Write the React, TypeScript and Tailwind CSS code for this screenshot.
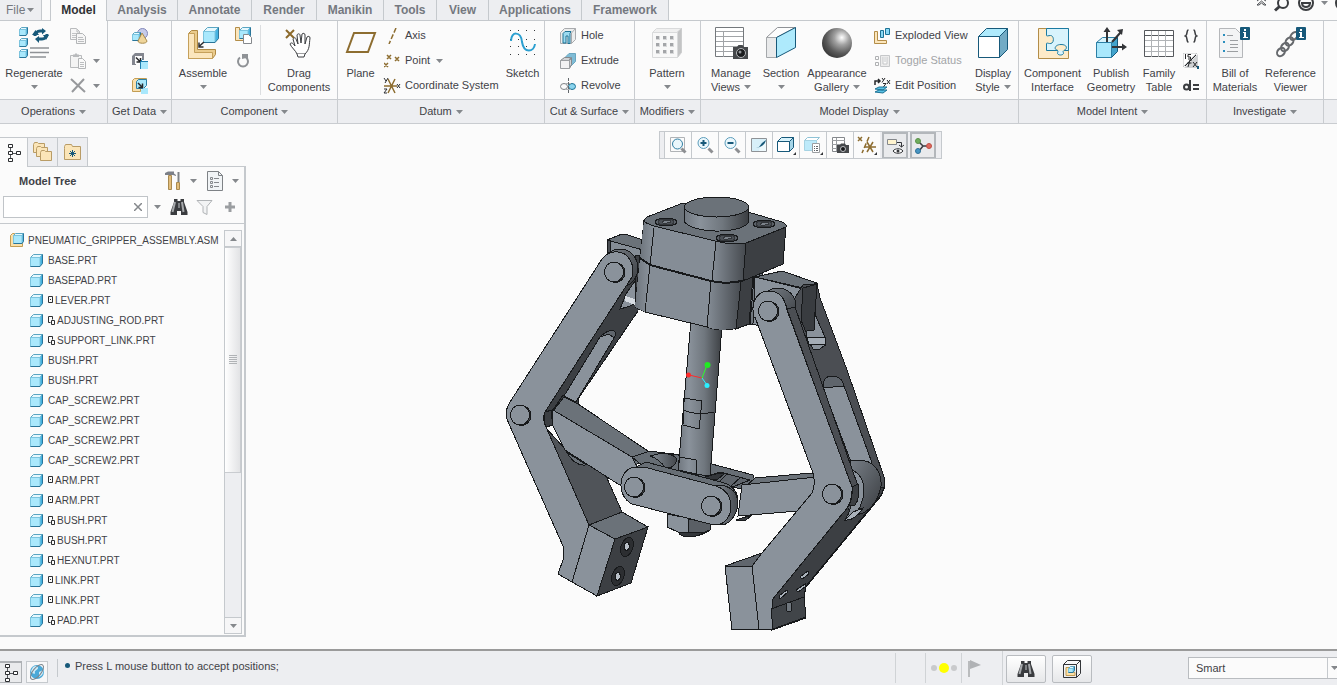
import type { ReactNode } from 'react'

const TABS = [
  { label: 'Analysis', width: 'w-[71px]' },
  { label: 'Annotate', width: 'w-[74px]' },
  { label: 'Render', width: 'w-[65px]' },
  { label: 'Manikin', width: 'w-[67px]' },
  { label: 'Tools', width: 'w-[53px]' },
  { label: 'View', width: 'w-[52px]' },
  { label: 'Applications', width: 'w-[93px]' },
  { label: 'Framework', width: 'w-[87px]' },
]

type Mark = 'packaged' | 'placed'

const PARTS: { name: string; mark?: Mark }[] = [
  { name: 'BASE.PRT' },
  { name: 'BASEPAD.PRT' },
  { name: 'LEVER.PRT', mark: 'packaged' },
  { name: 'ADJUSTING_ROD.PRT', mark: 'placed' },
  { name: 'SUPPORT_LINK.PRT', mark: 'placed' },
  { name: 'BUSH.PRT' },
  { name: 'BUSH.PRT' },
  { name: 'CAP_SCREW2.PRT' },
  { name: 'CAP_SCREW2.PRT' },
  { name: 'CAP_SCREW2.PRT' },
  { name: 'CAP_SCREW2.PRT' },
  { name: 'ARM.PRT', mark: 'packaged' },
  { name: 'ARM.PRT', mark: 'packaged' },
  { name: 'BUSH.PRT', mark: 'placed' },
  { name: 'BUSH.PRT', mark: 'placed' },
  { name: 'HEXNUT.PRT', mark: 'placed' },
  { name: 'LINK.PRT', mark: 'packaged' },
  { name: 'LINK.PRT', mark: 'packaged' },
  { name: 'PAD.PRT', mark: 'placed' },
]

/* ---------- shared bits ---------- */

function Svg({ w = 16, h, children }: { w?: number; h?: number; children: ReactNode }) {
  return (
    <svg width={w} height={h ?? w} viewBox={`0 0 ${w} ${h ?? w}`} fill="none" className="shrink-0" aria-hidden="true">
      {children}
    </svg>
  )
}

function Caret() {
  return (
    <svg width="7" height="4" viewBox="0 0 7 4" className="shrink-0" aria-hidden="true">
      <path d="M0 0h7L3.500 4z" fill="#85888c" />
    </svg>
  )
}

function Cube({ x = 0, y = 0, s = 14, d = 3 }: { x?: number; y?: number; s?: number; d?: number }) {
  const f = s - d
  return (
    <g transform={`translate(${x} ${y})`} strokeLinejoin="round">
      <path d={`M.5 ${d + 0.5}L${d + 0.5} .5H${s - 0.5}L${f} ${d + 0.5}z`} fill="#e4f8fe" stroke="#5aa5c2" />
      <path d={`M${f} ${d + 0.5}L${s - 0.5} .5V${f - 0.5}L${f} ${s - 0.5}z`} fill="#45b2e0" />
      <path d={`M.5 ${d + 0.5}H${f}V${s - 0.5}H.5z`} fill="#a9e8fc" stroke="#7cc4de" />
      <path d={`M.5 ${s - 0.5}H${f}L${s - 0.5} ${f - 0.5}V.5`} stroke="#2a7599" />
    </g>
  )
}

function Binoculars() {
  return (
    <Svg w={18} h={16}>
      <path d="M4 0h3.500v2h3V0H14v3l3.500 10v3H11v-4H7v4H.5v-3L4 3z" fill="#3a3c3f" />
      <path d="M5 3L2.500 13M12 3l1.500 10" stroke="#a6a9ac" strokeWidth="2" />
      <path d="M8 4h2v5H8z" fill="#7e8184" />
    </Svg>
  )
}

function TreeIcon() {
  return (
    <Svg w={14} h={20}>
      <path d="M3.500 5v3M3.500 12v3M6 10.500h3" stroke="#55585c" />
      <path d="M1.500 1.500h4v3h-4zM1.500 8.500h4v3h-4zM1.500 15.500h4v3h-4zM9.500 8.500h4v3h-4z" stroke="#2c2e31" fill="#fff" />
    </Svg>
  )
}

/* ---------- ribbon icons ---------- */

const regenerateIcon = (
  <Svg w={32}>
    <Cube x={1} s={9} d={2} />
    <Cube x={1} y={11} s={9} d={2} />
    <Cube x={1} y={22} s={9} d={2} />
    <path d="M17 9a5 5 0 0 1 5-5h3M29 7a5 5 0 0 1-5 5h-3" stroke="#17597a" strokeWidth="3" />
    <path d="M14 8h7l-3.500-5zM25 8h6l-3 5zM24 1l4 3-4 3.500zM21 9v7l-4-4z" fill="#17597a" />
    <path d="M12 21h19M12 25.500h19M12 30h16" stroke="#8f9296" strokeWidth="1.500" />
  </Svg>
)

const copyIcon = (
  <Svg>
    <path d="M.5.500h6l3 3v8h-9zM7 1v3h3" stroke="#b9bbbd" fill="#f6f6f6" />
    <path d="M2 5.500h5M2 7.500h5M2 9.500h5" stroke="#c2c4c6" />
    <path d="M6.500 5.500h6l3 3v7h-9z" stroke="#b3b5b7" fill="#f6f6f6" />
    <path d="M8 9.500h5M8 11.500h6M8 13.500h6" stroke="#bcbec0" />
  </Svg>
)

const pasteIcon = (
  <Svg>
    <path d="M.5 2.500h11v12H.5z" stroke="#b9bbbd" fill="#f4f4f4" />
    <path d="M3 4h6V1.500H7.500L6 0 4.500 1.500H3z" fill="#b9bbbd" />
    <path d="M8.500 5.500h4l3 3v7h-7z" stroke="#b3b5b7" fill="#fafafa" />
    <path d="M10 9.500h4M10 11.500h4M10 13.500h4" stroke="#bcbec0" />
  </Svg>
)

const deleteIcon = (
  <Svg>
    <path d="M1 1l14 13M14 1L2 14" stroke="#97999c" strokeWidth="2" />
  </Svg>
)

const userDataIcon = (
  <Svg>
    <circle cx="10.500" cy="5.500" r="5" fill="#c6cbea" stroke="#8186b8" />
    <Cube y={4} s={9} d={2} />
    <path d="M10 5l5 8c0 3-9 3-9 0z" fill="#efd59b" stroke="#a98b4c" />
  </Svg>
)

const copyGeomIcon = (
  <Svg>
    <path d="M0 3l3-3h9v7h-2V5L8 11H4v1H0z" fill="#83868f" />
    <path d="M3 3h7v8H3z" fill="#fdfdfd" />
    <path d="M4 4.500l4 4M8.500 5v4h-4" stroke="#26282b" strokeWidth="1.500" />
    <path d="M9 9h7v7H9z" fill="#a9e8fc" />
    <path d="M8.500 16V8.500l2-2M9 8.500h7" stroke="#1d7fb0" />
  </Svg>
)

const shrinkwrapIcon = (
  <Svg>
    <path d="M.5 2.500l2-2h12v4h-6v9h-8z" fill="#f8dfae" stroke="#c39d53" />
    <path d="M4.500 3.500l2-2h8v6l-3 3h-7z" fill="#a9e8fc" stroke="#2b7fa5" />
    <path d="M6 5l4 4M10.500 5.500v4h-4" stroke="#26282b" strokeWidth="1.500" />
    <path d="M9 12l3-2h4v6H9z" fill="#a9e8fc" />
  </Svg>
)

const assembleIcon = (
  <Svg w={32}>
    <path d="M1.500 6.500l3-3h6v19h18v5l-3 4h-24z" fill="#eacb8c" stroke="#b08a44" />
    <path d="M1.500 6.500h6v19h18v6h-24z" fill="#fbe6bd" stroke="#c5a05b" />
    <Cube x={16} s={16} d={4} />
    <path d="M17 15l-5 4.500M12 15.500v4.500h4.500" stroke="#2d2f32" strokeWidth="1.500" />
  </Svg>
)

const createIcon = (
  <Svg w={17}>
    <path d="M.5.500h4v9h8v4H.5z" fill="#fbe6bd" stroke="#b38d48" />
    <Cube x={4} s={12} d={3} />
    <path d="M8.500 7.500h5l3 3v6h-8z" fill="#fff" stroke="#85888c" />
  </Svg>
)

const repeatIcon = (
  <Svg w={14}>
    <path d="M4 3.500a5 5 0 1 0 6 0" stroke="#8f9296" strokeWidth="2" />
    <path d="M6 0h6v6l-2-2-4 1z" fill="#8f9296" />
  </Svg>
)

const dragIcon = (
  <Svg w={30} h={32}>
    <path d="M2 3l8 8M10 3l-8 8" stroke="#8c6a2c" strokeWidth="2" />
    <path
      d="M13 27c-1-3-6-7-7-10 1-2 3-1 5 2l-2-7c1-2 3-1 3 0l2 5-1-9c1-2 3-1 3 0l1 8 1-9c1-1 3-1 3 1v9l2-7c1-1 3-1 3 1-1 7 0 11-5 16z"
      fill="#fff"
      stroke="#3b3d40"
    />
    <path d="M13 27l1 3h6l1-3" stroke="#3b3d40" fill="#fff" />
  </Svg>
)

const planeIcon = (
  <Svg w={32}>
    <path d="M9 6h21l-7 19H2z" stroke="#8d6d30" strokeWidth="2" />
  </Svg>
)

const axisIcon = (
  <Svg>
    <path d="M12 0L5 16" stroke="#8d6d30" strokeWidth="1.500" strokeDasharray="5 2" />
  </Svg>
)

const pointIcon = (
  <Svg>
    <path d="M3 2l4 4M7 2L3 6M11 4l4 4M15 4l-4 4M0 10l4 4M4 10l-4 4" stroke="#8d6d30" strokeWidth="1.500" />
  </Svg>
)

const csysIcon = (
  <Svg w={18}>
    <path d="M1 9h13M5 2l7 14M12 2L5 16" stroke="#8d6d30" strokeWidth="1.500" />
    <path d="M1 1l2 3M5 1L2 6M1 12h3l-3 4h3M14 7l3 4M17 7l-3 4" stroke="#2d2f32" />
  </Svg>
)

const sketchIcon = (
  <Svg w={30} h={32}>
    {[3, 12, 19, 27].map(y => (
      <path key={y} d={`M2 ${y}.5h28`} stroke="#34373a" strokeDasharray="1 7" />
    ))}
    <path d="M3 14C3 4 13 4 14 15c2 12 12 10 13 2" stroke="#2b9fd0" strokeWidth="2" />
  </Svg>
)

const holeIcon = (
  <Svg>
    <path d="M.5 4.500l4-4h11v11l-4 4H.5z" fill="#eceded" stroke="#a9abae" />
    <path d="M3 15V5.500l2-2h6l-1 2v10H8V8H6v7z" fill="#9cdaf0" stroke="#1d7295" />
    <path d="M11.500 15.500V5l4-4.500" stroke="#a9abae" />
  </Svg>
)

const extrudeIcon = (
  <Svg>
    <path d="M5 4.500l4-4h6.500v8l-5 5z" fill="#7fbcd6" stroke="#6aa6c0" />
    <path d="M.5 7.500l4-3h6l-1 3zM9.500 7.500l2-3v7l-2 4z" fill="#d0d2d4" stroke="#85888c" />
    <path d="M.5 7.500h9v8h-9z" fill="#f1f1f2" stroke="#9b9ea1" />
  </Svg>
)

const revolveIcon = (
  <Svg>
    <ellipse cx="4" cy="8.500" rx="3.500" ry="3" stroke="#7e8286" />
    <ellipse cx="12" cy="8.500" rx="3.500" ry="3" fill="#8ad4ee" stroke="#1d7295" />
    <path d="M5 5.500h6M5 11.500h6" stroke="#b0b3b6" />
    <path d="M8.500 0v16" stroke="#63676b" strokeDasharray="3 1" />
  </Svg>
)

const patternIcon = (
  <Svg w={32}>
    <path d="M1.500 5.500l4-4h25l-5 4z" fill="#f0f0f0" stroke="#d9dadb" />
    <path d="M26.500 5.500l4-4v24l-4 5z" fill="#c3c4c5" stroke="#cccdce" />
    <path d="M1.500 5.500h25v25h-25z" fill="#f8f8f8" stroke="#d9dadb" />
    {[9, 16, 23].map(y => [5, 12, 19].map(x => (
      <g key={`${x}-${y}`}>
        <path d={`M${x} ${y}h4v4h-4z`} fill="#d7d8d9" />
        <path d={`M${x} ${y}h3v3h-3z`} fill="#a3a5a8" />
      </g>
    )))}
  </Svg>
)

const manageViewsIcon = (
  <Svg w={33} h={32}>
    <path d="M.5.500h28v29h-28z" fill="#fff" stroke="#74787c" />
    <path d="M1 4.500h27M1 9.500h27M1 14.500h27M1 19.500h27M1 24.500h27M8.500 5v25" stroke="#a1a4a7" />
    <path d="M18 20h4l1.500-2h4l1.500 2h4v12H18z" fill="#46484b" />
    <circle cx="26" cy="26" r="4.500" fill="#1b1c1e" stroke="#b5b7ba" />
    <circle cx="25" cy="25" r="1.500" fill="#95989c" />
  </Svg>
)

const sectionIcon = (
  <Svg w={32}>
    <path d="M1.500 10.500l11-10h18l-19 10z" fill="#fdfdfd" stroke="#8f9296" />
    <path d="M1.500 10.500h10v20h-10z" fill="#e9eaeb" stroke="#a5a8ab" />
    <path d="M11.500 10.500l19-10v20l-19 10z" fill="#aeeafc" stroke="#17597a" />
  </Svg>
)

const appearanceIcon = (
  <Svg w={32}>
    <defs>
      <radialGradient id="ball" cx=".66" cy=".32" r=".7">
        <stop offset="0" stopColor="#fff" />
        <stop offset=".35" stopColor="#a2a2a2" />
        <stop offset=".75" stopColor="#5a5a5a" />
        <stop offset="1" stopColor="#3e3e3e" />
      </radialGradient>
    </defs>
    <circle cx="16" cy="16" r="15" fill="url(#ball)" />
  </Svg>
)

const explodedIcon = (
  <Svg>
    <path d="M.5 3.500h3v9h9v3H.5z" fill="#fbe6bd" stroke="#b38d48" />
    <path d="M6.500 2.500h3v7h-3zM11.500.500h4v6h-4z" fill="#8ad9f5" stroke="#1d7295" />
  </Svg>
)

const toggleIcon = (
  <Svg h={12}>
    <path d="M1.500 1.500h3v3h-3zM1.500 7.500h3v3h-3z" stroke="#aeb0b2" />
    <path d="M6.500.500h9v11h-9zM9 2v7h4V2M11 2v5" stroke="#c6c8ca" fill="#ececec" />
  </Svg>
)

const editPositionIcon = (
  <Svg w={17}>
    <path d="M1 8V4h4M4 2l2 2-2 2" stroke="#26282b" strokeWidth="1.500" />
    <path d="M8 1l1.500 2M11 1L8 5.500M13 3l3 4M16 3l-3 4M9 6.500h3l-3 4h3" stroke="#26282b" />
    <path d="M1 12l4-2h8l-4 3zM1 15l4-2h8l-4 3z" fill="#59c2e6" stroke="#1d7295" />
  </Svg>
)

const displayStyleIcon = (
  <Svg w={32}>
    <path d="M1.500 9.500l8-8h21l-8 8z" fill="#aeeafc" stroke="#17597a" />
    <path d="M22.500 9.500l8-8v21l-8 8z" fill="#72abc5" stroke="#17597a" />
    <path d="M1.500 9.500h21v21h-21z" fill="#fff" stroke="#17597a" />
  </Svg>
)

const interfaceIcon = (
  <Svg w={32}>
    <path d="M1.500 1.500h30v30h-30z" fill="#fdebc9" stroke="#b38d48" />
    <path
      d="M9.500 1.500h22v22h-5c-1 0 0 2 0 3-1 2-5 2-6 0 0-1 1-3 0-3h-11v-7c0-1 2 0 3 0 5 1 5-8 1-8-2 0-4 1-4 0z"
      fill="#d8f3fc"
      stroke="#1b7aa2"
    />
    <path d="M21 23.500c-5-1-3-6 3-6s7 4 3 6" fill="#fdebc9" stroke="#1b7aa2" />
  </Svg>
)

const publishIcon = (
  <Svg w={32}>
    <path d="M1.500 15.500l6-5h15l-6 5z" fill="#d9f4fc" stroke="#2b7fa5" />
    <path d="M16.500 15.500l6-5v14l-6 6z" fill="#41a3cc" stroke="#17597a" />
    <path d="M1.500 15.500h15v15h-15z" fill="#a9e8fc" stroke="#2b7fa5" />
    <path d="M12 15V3M17 15L26 5M17 20h12" stroke="#333538" strokeWidth="2" />
    <path d="M8.500 5L12 0l3.500 5zM22 3l6-1-1 6zM27 16.500l5 3.500-5 3.500z" fill="#333538" />
  </Svg>
)

const familyIcon = (
  <Svg w={32}>
    <path d="M1.500 3.500h29v26h-29z" fill="#fff" stroke="#55585c" />
    <path d="M2 8.500h28" stroke="#55585c" />
    <path d="M2 13.500h28M2 19.500h28M2 24.500h28M8.500 4v26M15.500 4v26M22.500 4v26" stroke="#b0b3b6" />
  </Svg>
)

const bracketsIcon = (
  <Svg w={14}>
    <path d="M4.500 1C2 1 4 6 1.500 7 4 8 2 13 4.500 13M9.500 1c2.500 0 .5 5 3 6-2.500 1-.5 6-3 6" stroke="#3b3d40" strokeWidth="1.500" />
  </Svg>
)

const switchDimsIcon = (
  <Svg>
    <path d="M0 0h14L0 14z" fill="#fff" stroke="#bfc1c3" />
    <path d="M15 1v14H1z" fill="#d0d2d4" />
    <path d="M2.500 1v5M5 6h2.500V4H5V1.500h3M2 13L13 2M5 14l2-7h2M4.500 10h4M10 9l4 5M14 9l-4 5" stroke="#26282b" />
    <path d="M14 13h2v3h-2z" fill="#17597a" />
  </Svg>
)

const relationsIcon = (
  <Svg h={12}>
    <circle cx="3.500" cy="7" r="2.500" stroke="#3b3d40" strokeWidth="2" />
    <path d="M7 0v11M10 5h6M10 9h6" stroke="#3b3d40" strokeWidth="2" />
  </Svg>
)

const infoBadge = (
  <>
    <rect x="21" width="10" height="13" rx="1" fill="#17597a" />
    <path d="M25 2h2v2h-2zM24 5h3v5h2v1h-5v-1h1V6h-1z" fill="#fff" />
  </>
)

const bomIcon = (
  <Svg w={32}>
    <path d="M.5 1.500h16l7 7v22H.5z" fill="#f3f4f5" stroke="#b5b7ba" />
    <path d="M4 7h2v2H4zM4 14h2v2H4zM4 23h2v2H4z" fill="#2b8fbe" />
    <path d="M8 8.500h6M11 13.500h8M11 17.500h8M11 20.500h8M8 24.500h11" stroke="#9b9ea1" />
    {infoBadge}
  </Svg>
)

const refViewerIcon = (
  <Svg w={32}>
    <g stroke="#66696d" strokeWidth="2">
      <ellipse cx="6" cy="25" rx="4.500" ry="3.500" transform="rotate(-50 6 25)" />
      <ellipse cx="10" cy="20" rx="4.500" ry="3.500" transform="rotate(-50 10 20)" />
      <ellipse cx="14.500" cy="14.500" rx="4.500" ry="3.500" transform="rotate(-50 14.500 14.500)" />
      <ellipse cx="19" cy="9" rx="4.500" ry="3" transform="rotate(-50 19 9)" />
    </g>
    {infoBadge}
  </Svg>
)

/* ---------- ribbon ---------- */

function Group({ label, className, children }: { label: string; className: string; children: ReactNode }) {
  return (
    <section className={`${className} shrink-0 flex flex-col border-r border-[#c9ccd0]`}>
      <div className="h-[78px] flex">{children}</div>
      <button className="h-6 flex items-center justify-center gap-1 border-t border-[#c9ccd0] bg-[#edeef1] whitespace-nowrap">
        {label}
        <Caret />
      </button>
    </section>
  )
}

function BigButton({ icon, lines, caret, className }: {
  icon: ReactNode; lines: string[]; caret?: 'inline' | 'below'; className: string
}) {
  return (
    <button className={`${className} shrink-0 flex flex-col items-center pt-[6px] leading-[14px]`}>
      <span className="h-[39px]">{icon}</span>
      {lines.map((line, i) => (
        <span key={line} className="flex items-center gap-1 whitespace-nowrap">
          {line}
          {caret === 'inline' && i === lines.length - 1 && <Caret />}
        </span>
      ))}
      {caret === 'below' && <span className="h-[14px] flex items-center"><Caret /></span>}
    </button>
  )
}

function SmallButton({ icon, label, caret, disabled }: {
  icon: ReactNode; label?: string; caret?: boolean; disabled?: boolean
}) {
  return (
    <button
      disabled={disabled}
      className={`h-[25px] flex items-center whitespace-nowrap ${disabled ? 'text-[#a2a4a7]' : ''}`}
    >
      <span className="w-[18px] flex justify-center">{icon}</span>
      {label && <span className="ml-1">{label}</span>}
      {caret && <span className="ml-[6px]"><Caret /></span>}
    </button>
  )
}

function Ribbon() {
  return (
    <div className="flex overflow-hidden border-b border-[#c9ccd0]">
      <Group label="Operations" className="w-[108px]">
        <BigButton icon={regenerateIcon} lines={['Regenerate']} caret="below" className="w-[68px]" />
        <div className="pl-px pt-[2px]">
          <SmallButton icon={copyIcon} />
          <SmallButton icon={pasteIcon} caret />
          <SmallButton icon={deleteIcon} caret />
        </div>
      </Group>
      <Group label="Get Data" className="w-[64px]">
        <div className="flex-1 flex flex-col items-center pt-[2px]">
          <SmallButton icon={userDataIcon} />
          <SmallButton icon={copyGeomIcon} />
          <SmallButton icon={shrinkwrapIcon} />
        </div>
      </Group>
      <Group label="Component" className="w-[166px]">
        <BigButton icon={assembleIcon} lines={['Assemble']} caret="below" className="w-[62px]" />
        <div className="w-[26px] pt-[2px]">
          <SmallButton icon={createIcon} />
          <SmallButton icon={repeatIcon} />
        </div>
        <div className="my-1 border-l border-[#dcdee0]" />
        <BigButton icon={dragIcon} lines={['Drag', 'Components']} className="flex-1" />
      </Group>
      <Group label="Datum" className="w-[207px]">
        <BigButton icon={planeIcon} lines={['Plane']} className="w-[45px]" />
        <div className="flex-1 pt-[2px]">
          <SmallButton icon={axisIcon} label="Axis" />
          <SmallButton icon={pointIcon} label="Point" caret />
          <SmallButton icon={csysIcon} label="Coordinate System" />
        </div>
        <BigButton icon={sketchIcon} lines={['Sketch']} className="w-12" />
      </Group>
      <Group label="Cut & Surface" className="w-[90px]">
        <div className="pl-[14px] pt-[2px]">
          <SmallButton icon={holeIcon} label="Hole" />
          <SmallButton icon={extrudeIcon} label="Extrude" />
          <SmallButton icon={revolveIcon} label="Revolve" />
        </div>
      </Group>
      <Group label="Modifiers" className="w-[66px]">
        <BigButton icon={patternIcon} lines={['Pattern']} caret="below" className="w-[64px]" />
      </Group>
      <Group label="Model Display" className="w-[318px]">
        <BigButton icon={manageViewsIcon} lines={['Manage', 'Views']} caret="inline" className="w-[60px]" />
        <BigButton icon={sectionIcon} lines={['Section']} caret="below" className="w-[40px]" />
        <BigButton icon={appearanceIcon} lines={['Appearance', 'Gallery']} caret="inline" className="w-[72px]" />
        <div className="flex-1 pt-[2px]">
          <SmallButton icon={explodedIcon} label="Exploded View" />
          <SmallButton icon={toggleIcon} label="Toggle Status" disabled />
          <SmallButton icon={editPositionIcon} label="Edit Position" />
        </div>
        <BigButton icon={displayStyleIcon} lines={['Display', 'Style']} caret="inline" className="w-[50px]" />
      </Group>
      <Group label="Model Intent" className="w-[188px]">
        <BigButton icon={interfaceIcon} lines={['Component', 'Interface']} className="w-[67px]" />
        <BigButton icon={publishIcon} lines={['Publish', 'Geometry']} className="w-[50px]" />
        <BigButton icon={familyIcon} lines={['Family', 'Table']} className="w-[46px]" />
        <div className="pt-[2px]">
          <SmallButton icon={bracketsIcon} />
          <SmallButton icon={switchDimsIcon} />
          <SmallButton icon={relationsIcon} />
        </div>
      </Group>
      <Group label="Investigate" className="w-[117px]">
        <BigButton icon={bomIcon} lines={['Bill of', 'Materials']} className="w-[56px]" />
        <BigButton icon={refViewerIcon} lines={['Reference', 'Viewer']} className="w-[55px]" />
      </Group>
      <div className="flex-1 flex flex-col justify-end">
        <div className="h-6 border-t border-[#c9ccd0] bg-[#edeef1]" />
      </div>
    </div>
  )
}

function TabBar() {
  return (
    <nav className="h-[21px] flex text-[12px] font-bold text-[#74787f]">
      <button className="w-[42px] flex items-center gap-[2px] pl-[6px] border-r border-b border-[#c5c9cd] bg-[#edeef1] font-normal">
        File
        <Caret />
      </button>
      <div className="w-2 border-b border-[#c5c9cd]" />
      <button className="w-[57px] pb-px border-x border-[#c5c9cd] text-[#2f3235]">Model</button>
      {TABS.map(tab => (
        <button key={tab.label} className={`${tab.width} shrink-0 border-r border-b border-[#c5c9cd] bg-[#edeef1]`}>
          {tab.label}
        </button>
      ))}
      <div className="flex-1 flex justify-end items-start overflow-hidden border-b border-[#c5c9cd]">
        <svg width="84" height="12" viewBox="0 0 84 12" fill="none" aria-hidden="true">
          <path d="M4 1l4-3 5 3M4 5l4.500-4L13 5h-2L8.500 3 6 5z" stroke="#4a4d51" />
          <circle cx="30" cy="3" r="5" stroke="#3b3d40" strokeWidth="2" />
          <path d="M26.500 6.500L22 10.500" stroke="#3b3d40" strokeWidth="3" />
          <circle cx="53" cy="3" r="7" stroke="#3b3d40" strokeWidth="2" />
          <path d="M48 3h10M49 4c1 4 7 4 8 0" stroke="#3b3d40" strokeWidth="2" />
          <path d="M68 1h7l-3.500 4z" fill="#85888c" />
          <circle cx="90" cy="3" r="7" stroke="#3b3d40" strokeWidth="2" />
        </svg>
      </div>
    </nav>
  )
}

/* ---------- model tree ---------- */

function Folder({ x, y }: { x: number; y: number }) {
  return (
    <path
      d="M.5 2.500V10.500h11v-9h-6L4.500.500h-3z"
      transform={`translate(${x} ${y})`}
      fill="#fbe5b8"
      stroke="#b99c66"
    />
  )
}

function PartMark({ mark }: { mark: Mark }) {
  return mark === 'packaged' ? (
    <svg width="7" height="10" viewBox="0 0 7 10" fill="none" className="shrink-0">
      <path d="M.5 1.500h4v6h-4z" stroke="#2c2e31" />
      <path d="M2 4h1v1H2z" fill="#2c2e31" />
    </svg>
  ) : (
    <svg width="9" height="10" viewBox="0 0 9 10" fill="none" className="shrink-0">
      <path d="M2.500 7.500h-2v-6h4v3M3.500 5.500h3v4h-3z" stroke="#2c2e31" />
    </svg>
  )
}

function PartIcon() {
  return (
    <Svg w={18} h={14}>
      <Cube s={13} y={1} />
    </Svg>
  )
}

function ModelTree() {
  return (
    <aside className="w-[246px] shrink-0 flex flex-col pt-[13px] pb-3">
      <div className="h-[30px] flex">
        <button title="Model Tree" className="w-[27px] flex items-center justify-center border-t border-[#c5c9cd]">
          <TreeIcon />
        </button>
        <button title="Folder Browser" className="w-[31px] flex items-center justify-center border border-[#c5c9cd] bg-[#edeef1]">
          <Svg w={20}>
            <Folder x={0} y={0} />
            <Folder x={3} y={4} />
            <Folder x={7} y={8} />
          </Svg>
        </button>
        <button title="Favorites" className="w-[30px] flex items-center justify-center border border-l-0 border-[#c5c9cd] bg-[#edeef1]">
          <Svg w={18} h={16}>
            <path d="M.5 4.500v11h16v-13h-8l-1-2h-6l-1 2z" fill="#fbe5b8" stroke="#b99c66" />
            <path d="M8.500 6v7M5 9.500h7M6 7l5 5M11 7l-5 5" stroke="#17597a" />
          </Svg>
        </button>
        <div className="flex-1 border-b border-[#c5c9cd]" />
      </div>

      <div className="flex-1 min-h-0 flex flex-col border-r-2 border-b-2 border-[#c5c9cd]">
        <div className="h-7 flex items-center pl-[19px] pr-[5px]">
          <h2 className="flex-1 font-bold">Model Tree</h2>
          <button title="Settings" className="flex items-center gap-2">
            <Svg w={18} h={20}>
              <path d="M1 2l3-1.500h6v2L12 4v1L9 4H1z" fill="#7c8088" />
              <path d="M4.500 4.500h3v14h-3z" fill="#e3be7c" stroke="#a98a50" />
              <path d="M14.500 1v10" stroke="#7e8286" strokeWidth="2" />
              <path d="M12.500 11.500h3v7h-3z" fill="#e3be7c" stroke="#a98a50" />
            </Svg>
            <Caret />
          </button>
          <button title="Show" className="ml-[10px] flex items-center gap-2">
            <Svg w={17} h={20}>
              <path d="M.5.500h11l4 4v15H.5z" fill="#f1f4f6" stroke="#7e8286" />
              <path d="M11.500.500v4h4" stroke="#7e8286" />
              <path d="M3.500 6.500h2v2h-2zM3.500 10.500h2v2h-2zM3.500 14.500h2v2h-2zM7 7.500h5M7 11.500h5M7 15.500h5" stroke="#85888c" />
            </Svg>
            <Caret />
          </button>
        </div>
        <div className="h-7 flex items-start pl-[3px]">
          <div className="w-[145px] h-[22px] mt-px flex items-center border border-[#c0c4c8] bg-white">
            <input aria-label="Search model tree" className="min-w-0 flex-1 px-1 outline-none bg-transparent" />
            <button title="Clear" className="w-[18px] flex justify-center">
              <Svg w={8}>
                <path d="M0 0l8 8M8 0L0 8" stroke="#85888c" strokeWidth="1.500" />
              </Svg>
            </button>
          </div>
          <div className="h-6 flex items-center pl-[6px]">
            <button title="Search options"><Caret /></button>
            <button title="Find" className="ml-[9px]"><Binoculars /></button>
            <button title="Filter" className="ml-2">
              <Svg w={17}>
                <path d="M1 1.500h15l-5 6v8l-4-2v-6z" fill="#f2f3f4" stroke="#b0b3b6" />
              </Svg>
            </button>
            <button title="Expand" className="ml-[11px]">
              <Svg w={12}>
                <path d="M6 1v10M1 6h10" stroke="#9b9ea1" strokeWidth="3" />
              </Svg>
            </button>
          </div>
        </div>

        <div className="flex-1 min-h-0 flex pt-[6px] pr-[2px] pb-[1px] border-t border-[#c5c9cd]">
          <ul className="flex-1 min-w-0 overflow-hidden text-[10px] whitespace-nowrap">
            <li>
              <button className="h-5 flex items-center gap-[4px] pl-[10px]">
                <Svg w={14}>
                  <path d="M.5 2.500l2-2h2v9h8v4H.5z" fill="#fbe0a9" stroke="#c39d53" />
                  <Cube x={3} s={11} d={2} />
                </Svg>
                PNEUMATIC_GRIPPER_ASSEMBLY.ASM
              </button>
            </li>
            {PARTS.map((part, i) => (
              <li key={i}>
                <button className="h-5 flex items-center pl-[30px]">
                  <PartIcon />
                  {part.mark && <PartMark mark={part.mark} />}
                  {part.name}
                </button>
              </li>
            ))}
            <li className="pt-[3px] pl-[30px]"><PartIcon /></li>
          </ul>
          <div className="w-[18px] flex flex-col border border-[#c5c9cd] bg-[#edeef1]">
            <button title="Scroll up" className="h-4 flex items-center justify-center border-b border-[#c5c9cd] bg-[#f6f6f7]">
              <span className="rotate-180"><Caret /></span>
            </button>
            <div className="flex-1">
              <div className="h-[61%] flex flex-col items-center justify-center gap-px border border-l-0 border-[#c9ccd0] bg-gradient-to-r from-white to-[#e2e3e5]">
                {[0, 1, 2, 3, 4].map(n => <div key={n} className="w-2 h-px bg-[#b0b3b6]" />)}
              </div>
            </div>
            <button title="Scroll down" className="h-4 flex items-center justify-center border-t border-[#c5c9cd] bg-[#f6f6f7]">
              <Caret />
            </button>
          </div>
        </div>
      </div>
    </aside>
  )
}

/* ---------- graphics area ---------- */

const magnifier = <path d="M12.500 12.500l4 4" stroke="#8d8f92" strokeWidth="3" />

const VIEW_TOOLS: { title: string; icon: ReactNode; pressed?: boolean }[] = [
  {
    title: 'Refit',
    icon: (
      <Svg w={18}>
        <path d="M1.500 1.500h14v14h-14z" stroke="#b0b3b6" />
        <circle cx="8.500" cy="8" r="5" fill="#eaf7fc" stroke="#2f7ea3" />
        {magnifier}
      </Svg>
    ),
  },
  {
    title: 'Zoom In',
    icon: (
      <Svg w={18}>
        <circle cx="7.500" cy="7" r="5.500" fill="#eaf7fc" stroke="#5d9dbb" />
        <path d="M4.500 7h6M7.500 4v6" stroke="#17597a" strokeWidth="2" />
        {magnifier}
      </Svg>
    ),
  },
  {
    title: 'Zoom Out',
    icon: (
      <Svg w={18}>
        <circle cx="7.500" cy="7" r="5.500" fill="#eaf7fc" stroke="#5d9dbb" />
        <path d="M4.500 7h6" stroke="#17597a" strokeWidth="2" />
        {magnifier}
      </Svg>
    ),
  },
  {
    title: 'Repaint',
    icon: (
      <Svg w={18}>
        <path d="M1.500 2.500h15v13h-15z" fill="#d8f0f9" stroke="#8f9296" />
        <path d="M9 15c1-5 3-8 7-10v10z" fill="#eef9fd" />
        <path d="M6 12c4 0 9-3 10-8l-4 3-3 4z" fill="#17597a" />
      </Svg>
    ),
  },
  {
    title: 'Display Style',
    icon: (
      <Svg w={20}>
        <path d="M1.500 6.500l4-4h12l-4 4z" fill="#d8f3fc" stroke="#17597a" />
        <path d="M13.500 6.500l4-4v10l-4 4z" fill="#a5d5e8" stroke="#17597a" />
        <path d="M1.500 6.500h12v10h-12z" fill="#fff" stroke="#17597a" />
        <path d="M20 17v3h-3z" fill="#333538" />
      </Svg>
    ),
  },
  {
    title: 'Saved Orientations',
    icon: (
      <Svg w={20}>
        <path d="M1.500 5.500l3-3h12l-3 3z" fill="#fff" stroke="#8fc3d6" />
        <path d="M1.500 5.500h12v10h-12z" fill="#bdeafa" stroke="#a6d3e3" />
        <path d="M9.500 8.500h7v9h-7z" fill="#fff" stroke="#9b9ea1" />
        <path d="M11 11.500h1M11 13.500h1M11 15.500h1M13 11.500h2M13 13.500h2M13 15.500h2" stroke="#63676b" />
        <path d="M20 17v3h-3z" fill="#333538" />
      </Svg>
    ),
  },
  {
    title: 'View Manager',
    icon: (
      <Svg w={18}>
        <path d="M1.500 1.500h12v14h-12z" fill="#fff" stroke="#85888c" />
        <path d="M1 4.500h13M1 8.500h13M1 12.500h13M5.500 2v13" stroke="#9b9ea1" />
        <path d="M6 9h3l1-1.500h4L15 9h3v8H6z" fill="#46484b" />
        <circle cx="12" cy="13" r="2.500" fill="#17181a" stroke="#c0c2c5" />
      </Svg>
    ),
  },
  {
    title: 'Datum Display',
    icon: (
      <Svg w={20}>
        <path d="M1 2l4 4M5 2L1 6M16 7l-6 10M10 7l6 10M8 12h11" stroke="#8d6d30" strokeWidth="1.500" />
        <path d="M12 2L5 18" stroke="#8d6d30" strokeWidth="1.500" strokeDasharray="5 2" />
        <path d="M20 17v3h-3z" fill="#333538" />
      </Svg>
    ),
  },
  {
    title: 'Annotation Display',
    pressed: true,
    icon: (
      <Svg w={18}>
        <path d="M1.500 2.500h9v5h-9z" fill="#fff4cf" stroke="#85888c" />
        <path d="M11 5.500h4.500V10M13 8l2.500 2L18 8" stroke="#333538" />
        <path d="M7 14c2-3 8-3 10 0-2 3-8 3-10 0z" fill="#fff" stroke="#333538" />
        <circle cx="12" cy="14" r="1.500" fill="#333538" />
      </Svg>
    ),
  },
  {
    title: 'Spin Center',
    pressed: true,
    icon: (
      <Svg w={18}>
        <path d="M4 4l5 5M9 9l-4 5M9 9h6" stroke="#3b3d40" strokeWidth="1.500" />
        <circle cx="4" cy="4" r="2.500" fill="#6fae5c" stroke="#5a9049" />
        <circle cx="4" cy="14" r="2.500" fill="#4796c4" stroke="#2f7197" />
        <circle cx="15" cy="9" r="2.500" fill="#e0685c" stroke="#bb5046" />
      </Svg>
    ),
  },
]

function Pin({ x, y }: { x: number; y: number }) {
  return (
    <>
      <ellipse cx={x + 1.5} cy={y + 0.5} rx="9.500" ry="10" fill="#3c3f43" />
      <ellipse cx={x} cy={y} rx="9.500" ry="10" fill="#8a929b" />
    </>
  )
}

function Socket({ x, y }: { x: number; y: number }) {
  return (
    <>
      <ellipse cx={x} cy={y} rx="11" ry="4" fill="#5a6067" />
      <ellipse cx={x} cy={y} rx="8" ry="3" fill="#4b5056" stroke="#33363a" />
      <path d={`M${x - 4} ${y}l3 -2h5l1 2l-4 1h-4z`} fill="#7b828a" stroke="#33363a" />
    </>
  )
}

function Gripper() {
  return (
    <svg
      width="390"
      height="446"
      viewBox="500 190 390 446"
      role="img"
      aria-label="Pneumatic gripper assembly"
      stroke="#17191b"
      strokeWidth="1"
      shapeRendering="crispEdges"
      className="shrink-0"
    >
      <defs>
        <linearGradient id="rod" x1="0" x2="1">
          <stop offset="0" stopColor="#70777f" />
          <stop offset=".25" stopColor="#8a929b" />
          <stop offset=".6" stopColor="#70777e" />
          <stop offset="1" stopColor="#3c3f43" />
        </linearGradient>
        <linearGradient id="fillet" x1="0" x2="1">
          <stop offset="0" stopColor="#858d96" />
          <stop offset="1" stopColor="#45494e" />
        </linearGradient>
        <linearGradient id="edge" x1="0" x2="1">
          <stop offset="0" stopColor="#6e757d" />
          <stop offset="1" stopColor="#8a929b" />
        </linearGradient>
        <linearGradient id="ring" x1="0" x2="1" y2="1">
          <stop offset="0" stopColor="#7a8189" />
          <stop offset="1" stopColor="#393c40" />
        </linearGradient>
      </defs>

      {/* left bracket behind the arm */}
      <path d="M607 240l15-6 6 1 18 6v13z" fill="#6b7279" />
      <path d="M607 240l36 10v30l-36-15z" fill="#858d96" />
      <path d="M607 240v14l3-2v-11z" fill="#4a4e53" />

      {/* left arm, inner side */}
      <path d="M632 277l4-22h4l-2 56-60 88 1 10-34 16-1-14z" fill="#3c3f43" />
      <path d="M620 309l6-15 9-13v23l-8 3z" fill="#8a929b" />
      <path d="M625 296l10 3v6l-10-4z" fill="#d7dce2" stroke="none" />
      <path d="M600 337q8-8 14-6 3 2 0 7l-38 64-12-6z" fill="#8a929b" />
      <path d="M600 337q8-8 14-6 3 2 0 7l-5-4z" fill="#5f656c" />

      {/* left link */}
      <path d="M545 427l21 23 40 26 16 36-33 14z" fill="#505459" />
      <path d="M566 451q8 15 19 14l5-2-22-15z" fill="#6b7279" />
      <path d="M568 453l17 11" fill="none" />
      <path d="M553 411l11-14 14 7 70 47 34 4-50 10-77-52z" fill="#6b7279" />
      <path d="M553 410l79 47 6 12-12 20-19-12-42-27-13-26z" fill="#8a929b" />
      <path d="M553 410l10-15 15 9" fill="none" />

      {/* left arm, front plate */}
      <ellipse cx="620" cy="268" rx="18" ry="19" fill="url(#ring)" />
      <path
        d="M602 259q6-8 16-7c12 1 17 14 14 25l-42 65-45 70q-3 7 1 15l43 98-17 57-14-8 6-17-1-11-54-122q-6-11 1-22z"
        fill="#8a929b"
      />
      <path d="M545 412l7-2q-1 8 1 15l-7 2q-3-7-1-15z" fill="#3c3f43" />

      {/* left jaw */}
      <path d="M589 525l33-13 26 15-33 12z" fill="#6b7279" />
      <path d="M589 525l26 14-18 57-25-14z" fill="#8a929b" />
      <path d="M615 539l33-12-17 56-34 13z" fill="#3c3f43" />
      <ellipse cx="627" cy="547" rx="6" ry="10" transform="rotate(20 627 547)" fill="#2c2e31" />
      <path d="M624 544l4-2 2 5-3 4-3-2z" fill="#b9c0c8" />
      <ellipse cx="618" cy="576" rx="6" ry="10" transform="rotate(20 618 576)" fill="#2c2e31" />
      <path d="M615 574l4-2 2 5-3 4-3-2z" fill="#b9c0c8" />

      {/* centre link, rear half */}
      <path d="M632 457l18-6 28 4 75 20 3 8-12 6-60-9-40-13z" fill="#676e75" />
      <path d="M650 456q18-6 26 2 2 8-10 11-6-10-16-13z" fill="url(#fillet)" />
      <path d="M702 478l18-6 30 8-20 8z" fill="#60666d" />
      <path d="M702 478l17-5 5 1-7 6z" fill="#33363a" />
      <path d="M727 474l-9 9M741 477l-10 9" fill="none" />

      {/* nut */}
      <path d="M667 514v13l11 5 11 4q12 1 21-6v-12z" fill="#70777e" />
      <path d="M667 514v13l11 5h10v-14z" fill="#8a929b" />
      <path d="M688 519l22 3v8l-8 3h-14z" fill="#5a5f65" />
      <path d="M678 532h26q-6 5-15 5-8 0-11-5z" fill="#33363a" />

      {/* rod */}
      <path d="M691 320l31 6-12 150-32-4z" fill="url(#rod)" />
      <path d="M684 398l18 3-3 28-16-4zM683 410q14 6 31 2M680 457l16 3v14l-18-4z" fill="none" />

      {/* right link */}
      <path d="M755 478l57-5 4 5-70 8z" fill="#6b7279" />
      <path d="M742 485l74-8 4 10-22 24-60 5z" fill="#8a929b" />
      <path d="M736 520l16-5-7 6z" fill="#3c3f43" />

      {/* centre link, front half */}
      <path d="M636 467l10-5 75 20q16 4 17 18-1 18-12 23l-10 2z" fill="#676e75" />
      <path d="M716 485q20 0 22 17-1 17-14 23l-10-4z" fill="url(#fillet)" />
      <path d="M634 467h10l72 19c14 5 16 15 14 27q-4 12-16 12l-82-21c-16-8-14-34 2-37z" fill="#8a929b" />

      {/* right bracket */}
      <path d="M751 272l12-4-2 56h-12z" fill="#70777e" />
      <path d="M755 277l48 12-3 50-47-15z" fill="#8a929b" />
      <path d="M755 277l27-6 35 12-14 5z" fill="#6b7279" />

      {/* right arm, inner side */}
      <path d="M786 312l17-27 14-1 3 14 27 72 37 107v12l-3 7-75 91-2 10 2 21-34 12 79-142z" fill="#4b4e53" />
      <path d="M851 487l33 1-3 7-75 91-2 10 2 21-34 12-1-29 70-87z" fill="#3c3f43" />
      <path d="M803 288l14-4-3 47-8 1-5-12z" fill="#393c40" />
      <path d="M814 312l11 25v8l-5 4h-7l-7-12 1-6 7-1z" fill="#8a929b" />
      <path d="M807 337h18v8l-16-1z" fill="#a5adb6" />
      <path d="M823 388c0-9 3-12 9-12s9 2 11 7l29 80-3 6-18-7z" fill="#8a929b" />
      <path d="M823 388c0-9 3-12 9-12s9 2 11 7l1 3z" fill="#5f656c" />

      {/* roller */}
      <path d="M851 461l7-1c16 0 24 12 23 26q-4 20-18 27l-9 3-7-9z" fill="url(#ring)" />
      <path d="M852 470q12 5 12 22-2 17-13 27l-6 1q8-12 6-27z" fill="#8a929b" />
      <path d="M845 520q10 1 18-12l-10 4z" fill="#aab2bb" />

      {/* right arm, front plate */}
      <ellipse cx="778" cy="306" rx="18" ry="18" fill="url(#ring)" />
      <path d="M787 309l8-2 63 179-6 2z" fill="#4b4e53" />
      <path
        d="M754 317c-4-16 4-26 15-26 10 0 16 7 18 19l65 177q1 16-9 26l-71 87 1 29h-14l-7-63 10-13 50-60q4-8 1-20l-58-156z"
        fill="#8a929b"
      />
      <path d="M852 487l6-3q2 15-3 21l-6 1q4-9 3-19z" fill="#3c3f43" />

      {/* right jaw */}
      <path d="M725 566l37-13-10 13z" fill="#60666d" />
      <path d="M725 566h27l7 63-27 1z" fill="#8a929b" />
      <path d="M771 609l33-12 2 20-33 12z" fill="#414549" />
      <path d="M800 577l8-6 1 3-7 5zM796 590l9-6v3l-7 5zM779 596l8-6 1 2-8 7z" fill="#a9b1ba" />
      <ellipse cx="789" cy="607" rx="3" ry="5" fill="#70777e" />

      {/* lower body */}
      <path d="M640 258l-5 49 10 5 62 15q10 4 26 2l17-5 5-58z" fill="#858d96" />
      <path d="M640 258l-5 49 10 5 5-48z" fill="url(#edge)" stroke="none" />
      <path d="M711 281l31 1-5 46q-18 4-30-1z" fill="url(#fillet)" stroke="none" />
      <path d="M741 282l12-6-4 48-13 5z" fill="#3c3f43" />
      <path d="M650 265l-5 47M711 281l-4 46" fill="none" />

      {/* upper body */}
      <path d="M644 220l-4 39 10 6 61 16q18 4 34-1l38-16 3-39z" fill="#858d96" />
      <path d="M644 220l-4 39 10 6 4-37z" fill="url(#edge)" stroke="none" />
      <path d="M716 241h30l-3 40q-18 3-31-1z" fill="url(#fillet)" stroke="none" />
      <path d="M746 242l40-16-3 38-40 17z" fill="#3c3f43" />
      <path d="M654 228l-4 37M716 242l-4 38" fill="none" />
      <path d="M640 258l10 7 61 16q18 4 34-1" fill="none" strokeWidth="2" />
      <path d="M644 220l3-3 36-14 65 9 34 10q5 2 4 5l-40 16q-16 2-31-2l-61-15q-10-3-10-6z" fill="#6b7279" />
      <Socket x={666} y={222} />
      <Socket x={727} y={238} />
      <Socket x={764} y={224} />
      <path d="M684 207v14c6 12 54 14 64 2v-14z" fill="url(#rod)" />
      <ellipse cx="716.500" cy="207" rx="32" ry="10" fill="#6b7279" />

      <Pin x={614} y={272} />
      <Pin x={520} y={415} />
      <Pin x={634} y={487} />
      <Pin x={711} y={506} />
      <Pin x={768} y={311} />
      <Pin x={832} y={494} />

      {/* spin center */}
      <g shapeRendering="auto">
        <path d="M702 378l-13-3" stroke="#ff2b2b" />
        <path d="M702 378l5-13" stroke="#2bff2b" />
        <path d="M702 378l5 7" stroke="#2bf0ff" />
        <circle cx="688.500" cy="375" r="2.500" fill="#ff2b2b" stroke="none" />
        <circle cx="707.500" cy="365" r="3" fill="#22ea22" stroke="none" />
        <circle cx="707" cy="385.500" r="2.500" fill="#2bf0ff" stroke="none" />
      </g>
    </svg>
  )
}

function Viewport() {
  return (
    <main className="flex-1 min-w-0 overflow-hidden">
      <div className="flex justify-center pt-[7px] pl-[18px]">
        <div role="toolbar" className="h-7 flex border border-[#c5c9cd] bg-[#edeef1] pl-1 pr-[5px]">
          {VIEW_TOOLS.map(tool => (
            <button
              key={tool.title}
              title={tool.title}
              className={
                tool.pressed
                  ? 'w-[26px] ml-[2px] flex items-center justify-center border-2 border-b border-[#b3b7bb] bg-[#e9eaec]'
                  : 'w-[27px] flex items-center justify-center border-l border-[#c5c9cd] bg-[#fbfbfb]'
              }
            >
              {tool.icon}
            </button>
          ))}
        </div>
      </div>
      <div className="pt-[31px] pl-[254px]">
        <Gripper />
      </div>
    </main>
  )
}

/* ---------- status bar ---------- */

function StatusBar() {
  return (
    <footer className="h-[36px] shrink-0 flex items-stretch border-t-2 border-[#9a9a9a] bg-[#edeef1]">
      <button title="Navigator" className="w-[22px] h-[22px] mt-[10px] flex items-center justify-center border border-t-2 border-l-0 border-[#aeb1b5] bg-[#e9eaec]">
        <TreeIcon />
      </button>
      <button title="Browser" className="w-[22px] h-[22px] mt-[10px] ml-1 flex items-center justify-center border border-[#c5c9cd] bg-[#f7f7f8]">
        <Svg w={18}>
          <circle cx="9" cy="9" r="7" fill="#4aa9d8" />
          <path d="M5 4c3-2 5-1 5 1s-4 2-3 5c0 2-4 0-4-2zM11 9l4-2c1 3-1 6-4 7z" fill="#cfecf8" />
          <ellipse cx="9" cy="9" rx="9" ry="4" transform="rotate(-50 9 9)" stroke="#7c858d" />
        </Svg>
      </button>
      <div className="ml-[9px] my-2 border-l border-[#c5c9cd]" />
      <div className="flex-1 flex items-start pt-2 pl-[7px]">
        <span className="w-[5px] h-[5px] mt-1 mr-[5px] rounded-full bg-[#17597a]" />
        <p className="leading-[14px]">Press L mouse button to accept positions;</p>
      </div>
      <div className="w-[30px] my-[2px] border-l border-[#d0d3d6]" />
      <div className="w-9 my-[2px] flex items-center justify-center border-l border-[#d0d3d6]">
        <Svg w={28} h={12}>
          <circle cx="4" cy="6" r="3" fill="#c9cacc" />
          <circle cx="14" cy="6" r="5" fill="#ffff00" />
          <circle cx="24" cy="6" r="3" fill="#c9cacc" />
        </Svg>
      </div>
      <div className="w-[41px] my-[2px] flex items-center pl-[6px] border-l border-[#d0d3d6]">
        <Svg w={13} h={17}>
          <path d="M1 1v16" stroke="#b9bbbd" strokeWidth="2" />
          <path d="M2 0l11 5-11 4z" fill="#b0b2b5" />
        </Svg>
      </div>
      <div className="flex gap-[6px] py-1 pl-[3px] border-l border-[#d0d3d6]">
        <button title="Search" className="w-10 h-7 flex items-center justify-center rounded-[2px] border border-[#b9bcc0] bg-gradient-to-b from-white to-[#e6e7e9]">
          <Binoculars />
        </button>
        <button title="Selection" className="w-10 h-7 flex items-center justify-center rounded-[2px] border border-[#b9bcc0] bg-gradient-to-b from-white to-[#e6e7e9]">
          <Svg w={18}>
            <path d="M.5 4.500l4-4h13v13l-4 4H.5zM.5 4.500h13v13M13.500 4.500l4-4" stroke="#333538" />
            <path d="M3 7.500h3v5h6v3H3z" fill="#fbe0a9" stroke="#c39d53" />
            <Cube x={5} y={6} s={7} d={2} />
          </Svg>
        </button>
      </div>
      <div className="w-[149px] h-[22px] mt-[6px] ml-24 flex border border-r-0 border-[#b9bcc0] bg-[#fbfbfb] overflow-hidden">
        <select aria-label="Selection filter" className="flex-1 min-w-0 appearance-none pl-[7px] outline-none">
          <option>Smart</option>
          <option>Part</option>
          <option>Feature</option>
        </select>
        <span className="w-[10px] flex items-center pl-[3px] border-l border-[#c5c9cd]"><Caret /></span>
      </div>
    </footer>
  )
}

export default function App() {
  return (
    <div className="h-screen flex flex-col overflow-hidden bg-[#fbfbfb] text-[11px] text-[#3f4247] font-['Liberation_Sans',Arial,sans-serif]">
      <header>
        <TabBar />
        <Ribbon />
      </header>
      <div className="flex-1 min-h-0 flex">
        <ModelTree />
        <Viewport />
      </div>
      <StatusBar />
    </div>
  )
}
